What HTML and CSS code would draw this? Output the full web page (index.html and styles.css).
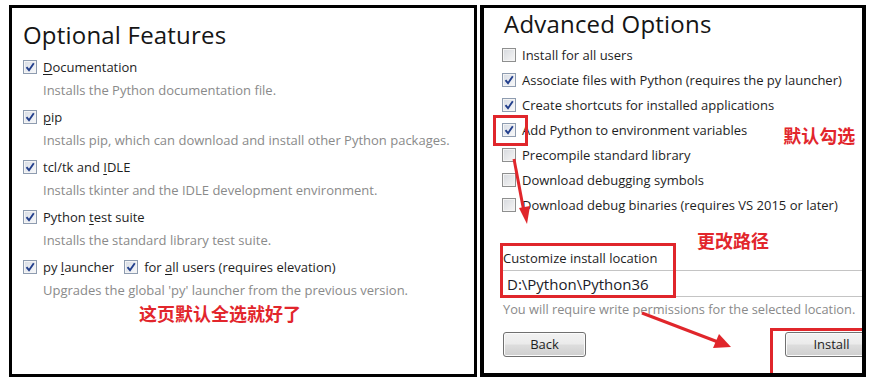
FILE: index.html
```html
<!DOCTYPE html>
<html lang="en">
<head>
    <meta charset="UTF-8">
    <title>Python Installer Options</title>
    <link rel="stylesheet" href="styles.css">
</head>
<body>
    <div class="shots">
        <!-- left: optional features -->
        <div class="panel panel-left">
            <h1 class="title">Optional Features</h1>

            <div class="feature">
                <div class="row"><span class="cb on"></span><span class="label"><u>D</u>ocumentation</span></div>
                <div class="desc">Installs the Python documentation file.</div>
            </div>
            <div class="feature">
                <div class="row"><span class="cb on"></span><span class="label"><u>p</u>ip</span></div>
                <div class="desc">Installs pip, which can download and install other Python packages.</div>
            </div>
            <div class="feature">
                <div class="row"><span class="cb on"></span><span class="label">tcl/tk and <u>I</u>DLE</span></div>
                <div class="desc">Installs tkinter and the IDLE development environment.</div>
            </div>
            <div class="feature">
                <div class="row"><span class="cb on"></span><span class="label">Python <u>t</u>est suite</span></div>
                <div class="desc">Installs the standard library test suite.</div>
            </div>
            <div class="feature">
                <div class="row">
                    <span class="cb on"></span><span class="label">py <u>l</u>auncher</span>
                    <span class="cb on cb-second"></span><span class="label">for <u>a</u>ll users (requires elevation)</span>
                </div>
                <div class="desc">Upgrades the global 'py' launcher from the previous version.</div>
            </div>

            <div class="note note-left">这页默认全选就好了</div>
        </div>

        <!-- right: advanced options -->
        <div class="panel panel-right">
            <h1 class="title">Advanced Options</h1>

            <div class="options">
                <div class="row"><span class="cb"></span><span class="label">Install for all users</span></div>
                <div class="row"><span class="cb on"></span><span class="label">Associate files with Python (requires the py launcher)</span></div>
                <div class="row"><span class="cb on"></span><span class="label">Create shortcuts for installed applications</span></div>
                <div class="row row-note">
                    <span class="cb on"></span><span class="label">Add Python to environment variables</span>
                    <span class="note note-default">默认勾选</span>
                </div>
                <div class="row"><span class="cb"></span><span class="label">Precompile standard library</span></div>
                <div class="row"><span class="cb"></span><span class="label">Download debugging symbols</span></div>
                <div class="row"><span class="cb"></span><span class="label">Download debug binaries (requires VS 2015 or later)</span></div>
            </div>

            <div class="location">
                <div class="loc-label">Customize install location</div>
                <div class="loc-input">D:\Python\Python36</div>
                <div class="loc-hint">You will require write permissions for the selected location.</div>
            </div>

            <div class="buttons">
                <span class="btn">Back</span>
                <span class="btn btn-install">Install</span>
            </div>

            <!-- annotations drawn over the screenshot -->
            <span class="mark mark-check"></span>
            <span class="mark mark-location"></span>
            <span class="mark mark-install"></span>
            <span class="note note-path">更改路径</span>
            <svg class="arrows" width="386" height="372" viewBox="480 5 386 372">
                <line x1="514" y1="159" x2="524" y2="212" stroke="#e0262b" stroke-width="3"/>
                <polygon points="527,224 519,208 530,206" fill="#e0262b"/>
                <line x1="642" y1="313" x2="718" y2="342" stroke="#e0262b" stroke-width="3"/>
                <polygon points="731,347 713,348 719,334" fill="#e0262b"/>
            </svg>
        </div>
    </div>
</body>
</html>
```

FILE: styles.css
```css
body {
    margin: 0;
    background: #fff;
    font-family: "Open Sans", "Noto Sans", sans-serif;
    color: #1e1e1e;
}

.shots {
    display: flex;
    gap: 3px;
    padding: 5px 0 0 9px;
}

.panel {
    position: relative;
    box-sizing: border-box;
    height: 372px;
    border: 3px solid #000;
    background: #fff;
    overflow: hidden;
}

.panel-left {
    width: 468px;
    padding: 12px 0 0 11px;
}

.panel-right {
    width: 386px;
    border-width: 3px 4px 4px 4px;
    padding: 0 0 0 19px;
}

.title {
    margin: 0;
    font-size: 24px;
    font-weight: 400;
    line-height: 30px;
    letter-spacing: 0.2px;
    color: #151515;
}

.panel-right .title {
    margin-top: 1px;
    margin-left: 1px;
}

.feature {
    margin-top: 9px;
    height: 41px;
}

.feature:first-of-type {
    margin-top: 8px;
}

.row {
    display: flex;
    align-items: center;
    height: 18px;
    font-size: 13px;
}

.label {
    margin-left: 6px;
    white-space: nowrap;
}

.label u {
    text-decoration-thickness: 1px;
    text-underline-offset: 2px;
}

.desc {
    margin: 5px 0 0 20px;
    font-size: 13px;
    color: #8a8a8a;
    white-space: nowrap;
}

/* windows 7 style checkbox */
.cb {
    box-sizing: border-box;
    width: 14px;
    height: 14px;
    flex: none;
    border: 1px solid #8e8f8f;
    background: linear-gradient(135deg, #d6d9de, #f6f6f6);
    box-shadow: inset 0 0 0 1px #f4f4f4;
}

.cb.on {
    border-color: #8e9cb0;
    background:
        url("data:image/svg+xml;utf8,<svg xmlns='http://www.w3.org/2000/svg' width='12' height='12'><path d='M2.5 6.2 L5 9.2 L9.8 2.3' fill='none' stroke='%23223f8c' stroke-width='1.9'/></svg>") center/12px no-repeat,
        linear-gradient(135deg, #d6dbe4, #f8f9fb);
}

.cb-second {
    margin-left: 10px;
}

.note {
    font-family: "Noto Sans CJK SC", sans-serif;
    font-weight: 700;
    font-size: 18px;
    color: #e2262c;
    white-space: nowrap;
}

.note-left {
    margin: 4px 0 0 116px;
    line-height: 20px;
}

.options {
    margin-top: 3px;
}

.options .row {
    height: 25px;
    margin-left: -1px;
}

.row-note .note-default {
    margin-left: 36px;
    margin-top: 10px;
}

.location {
    margin-top: 32px;
    font-size: 13px;
}

.loc-label {
    line-height: 18px;
}

.loc-input {
    box-sizing: border-box;
    height: 27px;
    margin: 3px 0 0 -2px;
    padding: 1px 0 0 6px;
    border-top: 1px solid #c4c4c4;
    border-bottom: 1px solid #c4c4c4;
    font-size: 15px;
    line-height: 24px;
    color: #1b1b28;
}

.loc-hint {
    margin-top: 3px;
    font-size: 12.8px;
    color: #8a8a8a;
    white-space: nowrap;
}

.buttons {
    display: flex;
    justify-content: space-between;
    margin-top: 14px;
}

.btn {
    box-sizing: border-box;
    width: 83px;
    height: 25px;
    border: 1px solid #707070;
    border-radius: 3px;
    background: linear-gradient(#f2f2f2 0%, #ebebeb 48%, #dddddd 52%, #cfcfcf 100%);
    box-shadow: inset 0 0 0 1px #fbfbfb;
    font-size: 13px;
    line-height: 23px;
    text-align: center;
}

.btn-install {
    width: 83px;
    margin-right: -6px;
    padding-left: 10px;
}

/* red annotation boxes */
.mark {
    position: absolute;
    box-sizing: border-box;
    border: 3px solid #e0262b;
}

.mark-check {
    left: 9px;
    top: 107px;
    width: 35px;
    height: 31px;
}

.mark-location {
    left: 16px;
    top: 235px;
    width: 176px;
    height: 55px;
}

.mark-install {
    left: 286px;
    top: 320px;
    width: 120px;
    height: 60px;
    border-bottom: none;
}

.note-path {
    position: absolute;
    left: 213px;
    top: 221px;
    line-height: 22px;
}

.arrows {
    position: absolute;
    left: -4px;
    top: -3px;
    pointer-events: none;
}
```
